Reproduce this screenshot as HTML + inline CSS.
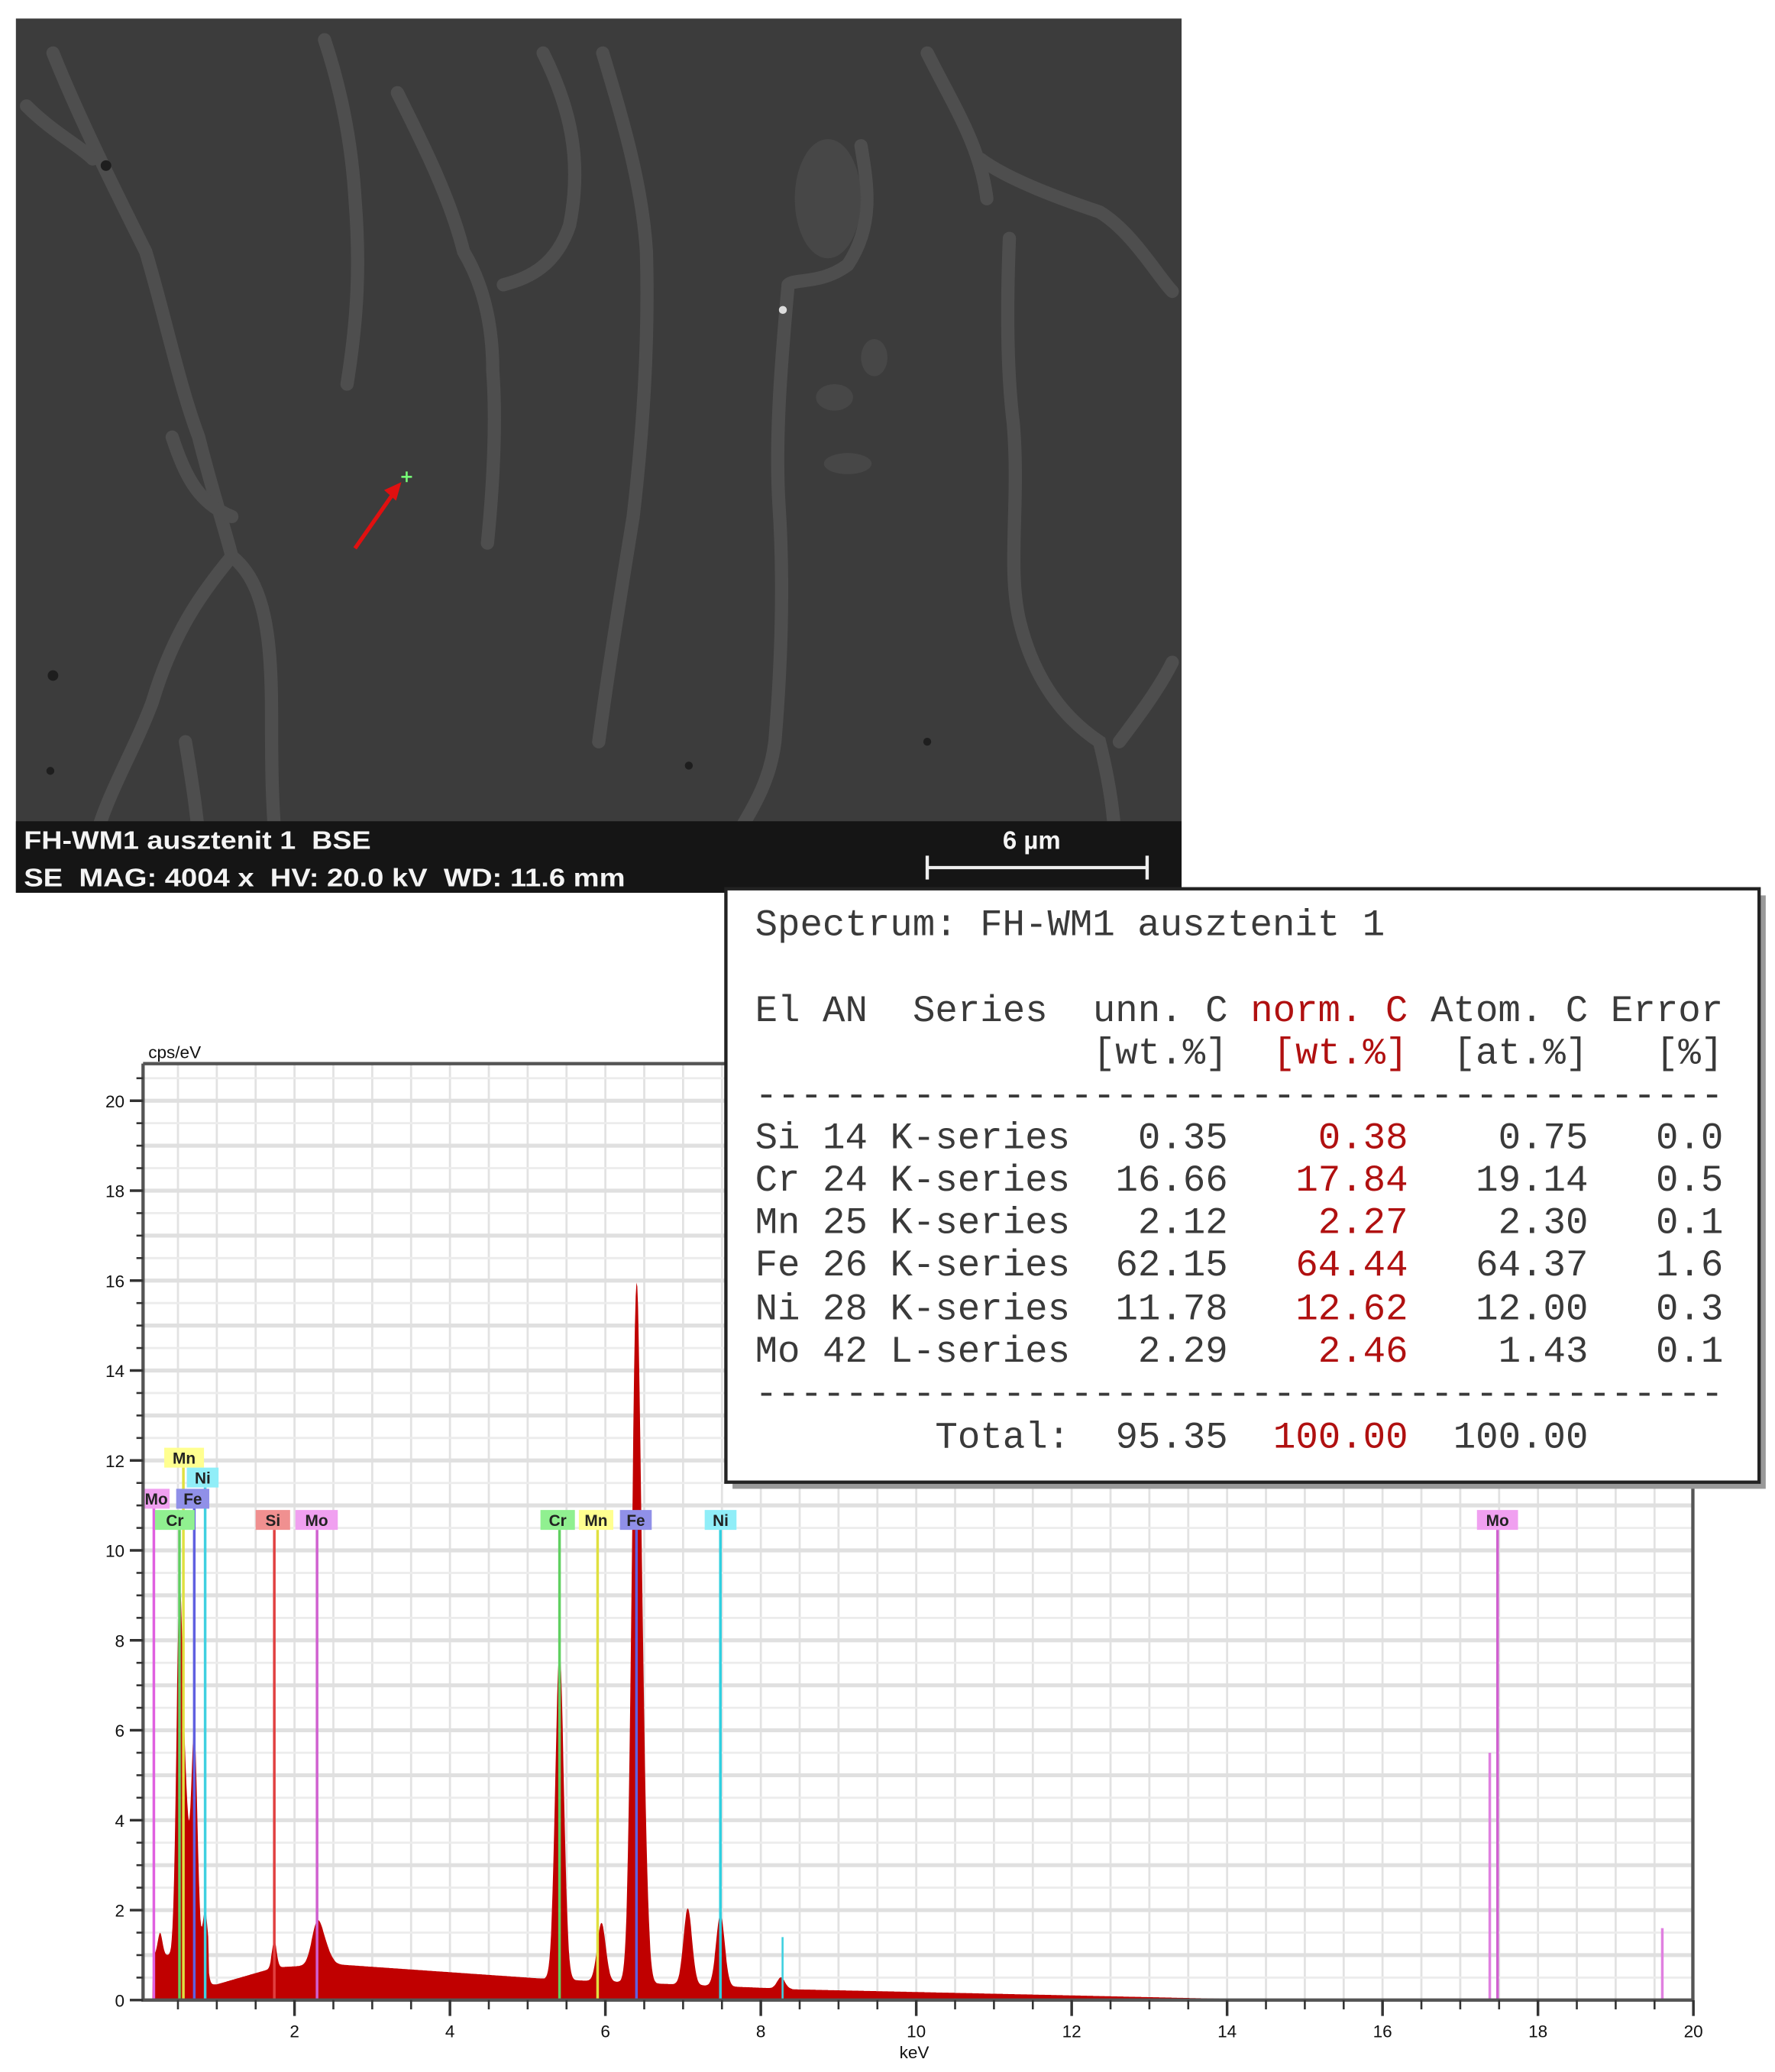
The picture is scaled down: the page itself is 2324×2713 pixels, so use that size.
<!DOCTYPE html>
<html><head><meta charset="utf-8">
<style>
html,body{margin:0;padding:0;background:#fff;}
svg{display:block;}
.mono text{font-family:"Liberation Mono",monospace;font-size:28.3px;fill:#3a3a3a;}
.mono .r{fill:#b01010;}
.ax{font-family:"Liberation Sans",sans-serif;font-size:13px;fill:#111;}
.lb{font-family:"Liberation Sans",sans-serif;font-size:12px;font-weight:bold;fill:#222;}
</style></head>
<body>
<svg id="s" width="2324" height="2713" viewBox="0 0 1340 1564.3" xmlns="http://www.w3.org/2000/svg">
<rect x="0" y="0" width="1340" height="1565" fill="#fff"/>
<rect x="12" y="14" width="880" height="660" fill="#3c3c3c"/>
<g fill="none" stroke="#505050" stroke-linecap="round" stroke-width="10" opacity="0.9">
<path d="M40 40 C60 90 90 150 110 190 C125 240 135 290 150 330 C160 370 170 400 175 420"/>
<path d="M175 420 C150 450 130 480 115 530 C100 570 80 600 70 640"/>
<path d="M175 420 C200 440 205 480 205 540 C205 580 205 610 210 660"/>
<path d="M130 330 C140 360 150 380 175 390"/>
<path d="M245 30 C255 60 265 100 268 150 C272 200 270 240 262 290"/>
<path d="M300 70 C320 110 340 150 350 190 C365 215 372 245 372 280 C375 320 372 370 368 410"/>
<path d="M410 40 C430 80 440 120 430 170 C420 200 400 210 380 215"/>
<path d="M455 40 C470 90 485 140 488 190 C490 260 485 330 478 390 C470 440 460 500 452 560"/>
<path d="M650 110 C655 140 660 170 640 200 C620 215 600 210 595 215"/>
<path d="M595 215 C590 270 585 330 588 380 C592 440 590 500 585 560 C580 600 560 620 540 660"/>
<path d="M740 120 C760 135 800 150 830 160 C855 175 875 210 885 220"/>
<path d="M762 180 C760 230 760 280 765 320 C770 380 760 430 770 470 C780 510 800 540 830 560 C840 600 845 640 840 670"/>
<path d="M700 40 C720 80 740 110 745 150"/>
<path d="M845 560 C860 540 875 520 885 500"/>
<path d="M20 80 C40 100 60 110 70 120"/>
<path d="M140 560 C145 590 150 620 152 660"/>
</g>
<g fill="#4a4a4a" opacity="0.8">
<ellipse cx="625" cy="150" rx="25" ry="45"/>
<ellipse cx="630" cy="300" rx="14" ry="10"/>
<ellipse cx="660" cy="270" rx="10" ry="14"/>
<ellipse cx="640" cy="350" rx="18" ry="8"/>
</g>
<circle cx="591" cy="234" r="3" fill="#ddd"/>
<g fill="#1e1e1e"><circle cx="80" cy="125" r="4"/><circle cx="40" cy="510" r="4"/><circle cx="38" cy="582" r="3"/><circle cx="520" cy="578" r="3"/><circle cx="700" cy="560" r="3"/></g>
<line x1="268" y1="414" x2="298" y2="371" stroke="#e01010" stroke-width="3"/>
<polygon points="303,364 290,370 299,378" fill="#e01010"/>
<path d="M303 360 h8 M307 356 v8" stroke="#7f7" stroke-width="1.5"/>
<rect x="12" y="620" width="880" height="54" fill="#151515"/>
<text x="18" y="641" font-family="Liberation Sans,sans-serif" font-weight="bold" font-size="19" fill="#f4f4f4" textLength="262" lengthAdjust="spacingAndGlyphs">FH-WM1 ausztenit 1 &#160;BSE</text>
<text x="18" y="669" font-family="Liberation Sans,sans-serif" font-weight="bold" font-size="19" fill="#f4f4f4" textLength="454" lengthAdjust="spacingAndGlyphs">SE &#160;MAG: 4004 x &#160;HV: 20.0 kV &#160;WD: 11.6 mm</text>
<text x="757" y="641" font-family="Liberation Sans,sans-serif" font-weight="bold" font-size="19" fill="#f4f4f4">6 µm</text>
<path d="M700 655 H866 M700 646 V664 M866 646 V664" stroke="#eee" stroke-width="2.5" fill="none"/>

<g id="grid"></g>
<path id="spec" fill="#c00000" d=""/>
<g id="lines"></g>
<path d="M108 803 H1278 V1510 M108 803 V1510 H1278" stroke="#555" stroke-width="2.5" fill="none"/>
<g id="ticks"></g>
<text x="112" y="799" class="ax" font-size="12">cps/eV</text>
<text x="679" y="1554" class="ax">keV</text>

<rect x="553" y="676" width="780" height="448" fill="#999"/>
<rect x="548" y="671" width="780" height="448" fill="#fff" stroke="#222" stroke-width="2.5"/>
<g class="mono" id="tbl">
<text x="570" y="706">Spectrum: FH-WM1 ausztenit 1</text>
<text x="570" y="771">El</text><text x="621" y="771">AN</text><text x="689" y="771">Series</text><text x="825" y="771">unn. C</text><text x="944" y="771" class="r">norm. C</text><text x="1080" y="771">Atom. C</text><text x="1216" y="771">Error</text>
<text x="825" y="803">[wt.%]</text><text x="961" y="803" class="r">[wt.%]</text><text x="1097" y="803">[at.%]</text><text x="1250" y="803">[%]</text>
<text x="570" y="835" textLength="731" lengthAdjust="spacingAndGlyphs">-------------------------------------------</text>
<text x="570" y="1060" textLength="731" lengthAdjust="spacingAndGlyphs">-------------------------------------------</text>
<text x="706" y="1093">Total:</text>
<text x="927" y="1093" text-anchor="end">95.35</text><text x="1063" y="1093" text-anchor="end" class="r">100.00</text><text x="1199" y="1093" text-anchor="end">100.00</text>
</g>
</svg>
<script>
(function(){
var NS="http://www.w3.org/2000/svg";
function X(k){return 105+58.67*k;}
function Y(v){return 1510-33.95*v;}
function el(p,t,a){var e=document.createElementNS(NS,t);for(var k in a)e.setAttribute(k,a[k]);p.appendChild(e);return e;}
var tb=document.getElementById('tbl');
var rows=[['Si','14','K-series','0.35','0.38','0.75','0.0',867],['Cr','24','K-series','16.66','17.84','19.14','0.5',899],['Mn','25','K-series','2.12','2.27','2.30','0.1',931],['Fe','26','K-series','62.15','64.44','64.37','1.6',963],['Ni','28','K-series','11.78','12.62','12.00','0.3',996],['Mo','42','L-series','2.29','2.46','1.43','0.1',1028]];
rows.forEach(function(r){var y=r[7];
 var a=[[570,r[0],0],[621,r[1],0],[672,r[2],0],[927,r[3],1],[1063,r[4],1],[1199,r[5],1],[1301,r[6],1]];
 a.forEach(function(c,i){var t=el(tb,'text',{x:c[0],y:y});if(c[2])t.setAttribute('text-anchor','end');if(i==4)t.setAttribute('class','r');t.textContent=c[1];});
});
var g=document.getElementById('grid');
for(var k=0.5;k<20;k+=0.5){el(g,'line',{x1:X(k),x2:X(k),y1:804,y2:1509,stroke:'#e2e2e2','stroke-width':1.6});}
for(var v=0.5;v<=20.5;v+=0.5){el(g,'line',{x1:109,x2:1277,y1:Y(v),y2:Y(v),stroke:(v%1==0?'#e0e0e0':'#ececec'),'stroke-width':(v%1==0?3:1.6)});}
var peaks=[[0.27,0.5,0.03],[0.52,7.8,0.04],[0.6,3,0.04],[0.71,5.0,0.04],[0.85,1.0,0.03],[1.74,0.6,0.03],[2.29,0.9,0.07],[2.4,0.3,0.07],[5.41,7.3,0.055],[5.95,1.3,0.055],[6.40,15.3,0.06],[6.5,2,0.05],[7.06,1.7,0.055],[7.48,1.6,0.055],[8.26,0.25,0.05]];
function bg(k){
 if(k<0.18)return 0;
 if(k<0.9)return 1.0;
 if(k<1.0)return 0.35;
 if(k<1.7)return 0.35+(k-1.0)*0.5;
 if(k<2.5)return 0.72+(k-1.7)*0.1;
 if(k<5.2)return 0.8-(k-2.5)*0.12;
 if(k<8.4)return 0.47-(k-5.2)*0.07;
 if(k<14)return Math.max(0.02,0.24-(k-8.4)*0.038);
 if(k<17)return 0.02;
 return 0.005;
}
var d='M'+X(0.15)+' '+Y(0);
for(var k=0.15;k<=20;k+=0.01){
 var v=bg(k);
 for(var i=0;i<peaks.length;i++){var p=peaks[i];var z=(k-p[0])/p[2];v+=p[1]*Math.exp(-0.5*z*z);}
 d+=' L'+X(k).toFixed(1)+' '+Y(v).toFixed(1);
}
d+=' L'+X(20)+' '+Y(0)+' Z';
document.getElementById('spec').setAttribute('d',d);
var L=document.getElementById('lines');
var lines=[[0.19,'#e060e0',1130],[0.52,'#60d060',1155],[0.57,'#e0e040',1108],[0.71,'#6060e0',1138],[0.85,'#40d0e0',1123],[1.74,'#e04040',1155],[2.29,'#d060d0',1155],[5.41,'#60d060',1155],[5.9,'#e0e040',1155],[6.40,'#6060e0',1155],[7.48,'#30d0e0',1155],[17.48,'#d060d0',1155]];
lines.forEach(function(a){el(L,'line',{x1:X(a[0]),x2:X(a[0]),y1:a[2],y2:1509,stroke:a[1],'stroke-width':2});});
el(L,'line',{x1:X(17.38),x2:X(17.38),y1:Y(5.5),y2:1509,stroke:'#e080e0','stroke-width':2});
el(L,'line',{x1:X(19.6),x2:X(19.6),y1:Y(1.6),y2:1509,stroke:'#e080e0','stroke-width':2});
el(L,'line',{x1:X(8.28),x2:X(8.28),y1:Y(1.4),y2:1509,stroke:'#40d0e0','stroke-width':1.5});
var labs=[['Mn',124,1093,30,'#ffff90'],['Ni',141,1108,24,'#90eef8'],['Mo',108,1124,20,'#f0a0f0'],['Fe',133,1124,25,'#9090e8'],['Cr',117,1140,30,'#90f090'],['Si',193,1140,26,'#f09090'],['Mo',223,1140,32,'#f0a0f0'],['Cr',408,1140,26,'#90f090'],['Mn',437,1140,26,'#ffff90'],['Fe',468,1140,24,'#9090e8'],['Ni',532,1140,24,'#90eef8'],['Mo',1115,1140,31,'#f0a0f0']];
labs.forEach(function(a){el(L,'rect',{x:a[1],y:a[2],width:a[3],height:15,fill:a[4]});var t=el(L,'text',{x:a[1]+a[3]/2,y:a[2]+12,'text-anchor':'middle','class':'lb'});t.textContent=a[0];});
var T=document.getElementById('ticks');
for(var v=0;v<=20.5;v+=0.5){var big=(v%2==0);el(T,'line',{x1:big?98:103,x2:108,y1:Y(v),y2:Y(v),stroke:'#333','stroke-width':big?2:1.5});
 if(big){var t=el(T,'text',{x:94,y:Y(v)+5,'text-anchor':'end','class':'ax'});t.textContent=v;}}
for(var k=0.5;k<=20;k+=0.5){var big=(k%2==0);el(T,'line',{x1:X(k),x2:X(k),y1:1510,y2:big?1522:1517,stroke:'#333','stroke-width':big?2:1.5});
 if(big){var t=el(T,'text',{x:X(k),y:1538,'text-anchor':'middle','class':'ax'});t.textContent=k;}}
})();
</script>
</body></html>
